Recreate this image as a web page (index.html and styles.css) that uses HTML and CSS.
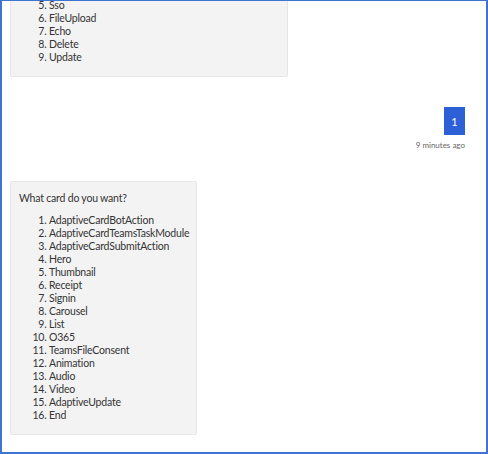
FILE: index.html
```html
<!DOCTYPE html>
<html lang="en">
<head>
    <meta charset="UTF-8">
    <meta name="viewport" content="width=device-width, initial-scale=1.0">
    <title>Bot Chat</title>
    <link rel="stylesheet" href="styles.css">
</head>
<body>

    <div id="frame">
        <div id="transcript">

            <!-- Earlier bot message, scrolled up -->
            <div class="card card-first">
                <ol start="5">
                    <li>Sso</li>
                    <li>FileUpload</li>
                    <li>Echo</li>
                    <li>Delete</li>
                    <li>Update</li>
                </ol>
            </div>

            <!-- User reply -->
            <div class="user-row">
                <div class="bubble">1</div>
                <div class="timestamp">9 minutes ago</div>
            </div>

            <!-- Bot question -->
            <div class="card">
                <p class="question">What card do you want?</p>
                <ol>
                    <li>AdaptiveCardBotAction</li>
                    <li>AdaptiveCardTeamsTaskModule</li>
                    <li>AdaptiveCardSubmitAction</li>
                    <li>Hero</li>
                    <li>Thumbnail</li>
                    <li>Receipt</li>
                    <li>Signin</li>
                    <li>Carousel</li>
                    <li>List</li>
                    <li>O365</li>
                    <li>TeamsFileConsent</li>
                    <li>Animation</li>
                    <li>Audio</li>
                    <li>Video</li>
                    <li>AdaptiveUpdate</li>
                    <li>End</li>
                </ol>
            </div>

        </div>
    </div>

</body>
</html>
```

FILE: styles.css
```css
html, body {
    margin: 0;
    padding: 0;
    background-color: #ffffff;
}
body {
    font-family: Lato, "Noto Sans", Arial, sans-serif;
    color: #333333;
}

/* Window frame */
#frame {
    box-sizing: border-box;
    width: 488px;
    height: 454px;
    border-top: 1px solid #3f74d2;
    border-left: 2px solid #3f74d2;
    border-right: 2px solid #3f74d2;
    border-bottom: 2px solid #3f74d2;
    overflow: hidden;
}
#transcript {
    display: flex;
    flex-direction: column;
    align-items: flex-start;
    padding: 0 21px 0 8px;
}

/* Bot cards */
.card {
    background-color: #f3f3f3;
    border: 1px solid #e6e6e6;
    border-radius: 2px;
    padding: 10px 7px 12px 8px;
    font-size: 10.5px;
    letter-spacing: -0.2px;
    line-height: 13px;
}
.card-first {
    width: 261px;
    margin-top: -13px;
}
.card ol {
    margin: 0;
    padding-left: 30px;
}
.question {
    margin: 0 0 9px 0;
}

/* User message */
.user-row {
    align-self: flex-end;
    display: flex;
    flex-direction: column;
    align-items: flex-end;
    margin: 30px 0 30px 0;
}
.bubble {
    width: 21px;
    height: 28px;
    background-color: #2d5fd6;
    color: white;
    font-size: 11px;
    display: flex;
    justify-content: center;
    align-items: center;
}
.timestamp {
    margin-top: 5px;
    font-size: 8px;
    line-height: 11px;
    color: #666666;
}
```
